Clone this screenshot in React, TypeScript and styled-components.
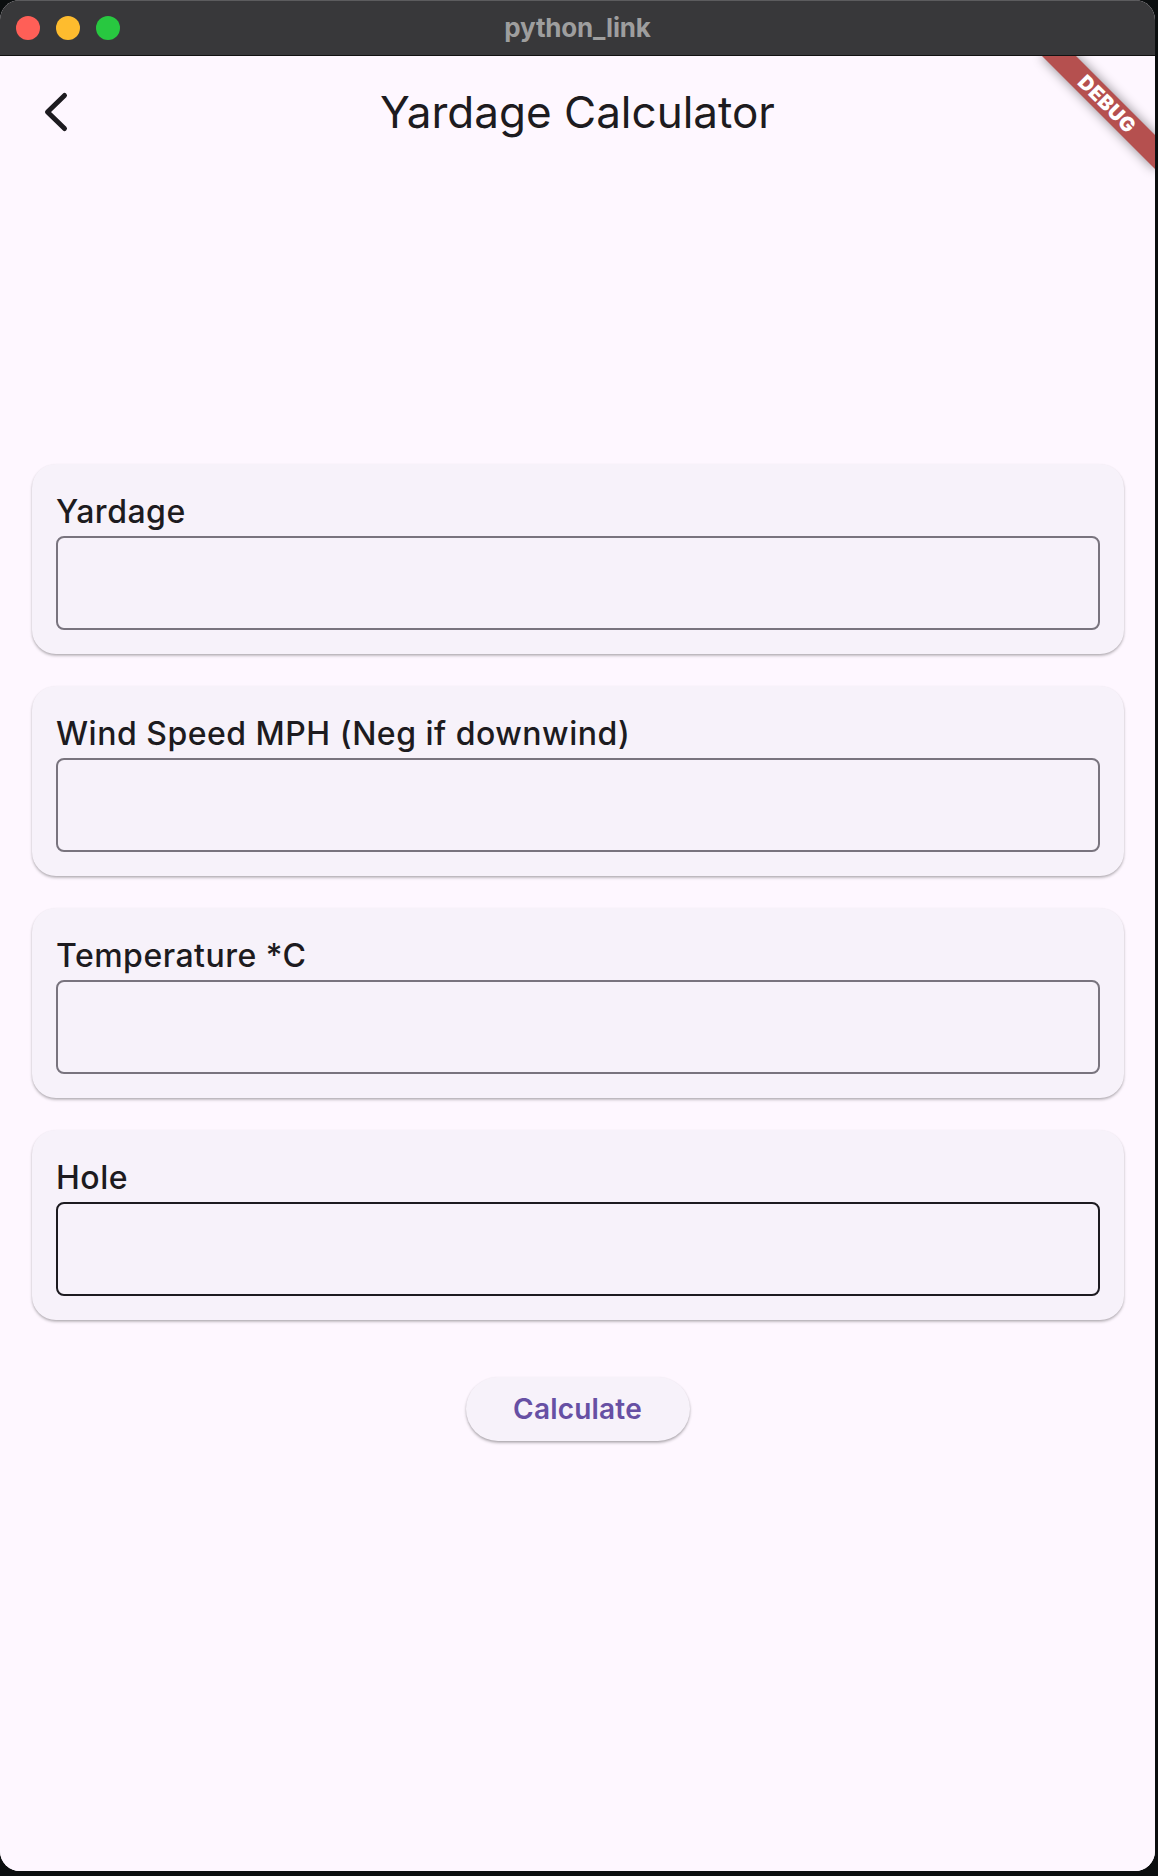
import styled, { createGlobalStyle } from 'styled-components'

const GlobalStyle = createGlobalStyle`
  html, body {
    margin: 0;
    padding: 0;
    background: #0b0e0f;
  }
  body {
    font-family: Inter, "Noto Sans", sans-serif;
  }
`

const fields = [
  { label: 'Yardage', active: false },
  { label: 'Wind Speed MPH (Neg if downwind)', active: false },
  { label: 'Temperature *C', active: false },
  { label: 'Hole', active: true },
]

const BackIcon = () => (
  <svg width="48" height="48" viewBox="0 0 48 48" fill="none">
    <polyline
      points="32.5,7.5 15.5,24 32.5,40.5"
      stroke="#1d1b20"
      strokeWidth="5"
      strokeLinecap="round"
      strokeLinejoin="round"
    />
  </svg>
)

export default function App() {
  return (
    <>
      <GlobalStyle />
      <Window>
        <TitleBar>
          <Lights>
            <Light color="#ff5f57" />
            <Light color="#febc2e" />
            <Light color="#28c840" />
          </Lights>
          <WindowTitle>python_link</WindowTitle>
        </TitleBar>

        <Content>
          <AppBar>
            <BackButton aria-label="Back">
              <BackIcon />
            </BackButton>
            <PageTitle>Yardage Calculator</PageTitle>
            <span />
          </AppBar>

          <Form>
            {fields.map((f) => (
              <FieldCard key={f.label}>
                <Label>{f.label}</Label>
                <Input $active={f.active} />
              </FieldCard>
            ))}
          </Form>

          <Actions>
            <CalcButton>Calculate</CalcButton>
          </Actions>

          <DebugRibbon>DEBUG</DebugRibbon>
        </Content>
      </Window>
    </>
  )
}

const Window = styled.div`
  width: 1155px;
  height: 1871px;
  border-radius: 20px;
  overflow: hidden;
  display: flex;
  flex-direction: column;
  background: #fef7ff;
`

const TitleBar = styled.div`
  position: relative;
  height: 55px;
  flex-shrink: 0;
  background: #38383a;
  border-bottom: 1px solid #121212;
  box-shadow: inset 0 1px 0 #5c5c5e;
  display: flex;
  align-items: center;
  justify-content: center;
`

const Lights = styled.div`
  position: absolute;
  left: 16px;
  top: 16px;
  display: flex;
  gap: 16px;
`

const Light = styled.span<{ color: string }>`
  width: 24px;
  height: 24px;
  border-radius: 50%;
  background: ${(p) => p.color};
`

const WindowTitle = styled.div`
  font-family: Inter, sans-serif;
  font-weight: 700;
  font-size: 26px;
  color: #9e9e9e;
  letter-spacing: -0.2px;
`

const Content = styled.div`
  position: relative;
  flex: 1;
  overflow: hidden;
  background: #fef7ff;
`

const AppBar = styled.div`
  height: 112px;
  display: grid;
  grid-template-columns: 112px 1fr 112px;
  align-items: center;
`

const BackButton = styled.button`
  width: 48px;
  height: 48px;
  margin-left: 32px;
  padding: 0;
  border: none;
  background: none;
  display: flex;
`

const PageTitle = styled.h1`
  margin: 0;
  text-align: center;
  font-family: Inter, sans-serif;
  font-weight: 400;
  font-size: 44px;
  line-height: 56px;
  color: #1d1b20;
`

const Form = styled.div`
  display: flex;
  flex-direction: column;
  gap: 32px;
  padding: 296px 31px 0 32px;
`

const FieldCard = styled.div`
  background: #f7f2fa;
  border-radius: 24px;
  padding: 24px;
  box-shadow: 0 2px 3px rgba(0, 0, 0, 0.22), 0 1px 2px rgba(0, 0, 0, 0.1);
`

const Label = styled.div`
  font-family: Inter, sans-serif;
  font-weight: 500;
  font-size: 32px;
  line-height: 48px;
  letter-spacing: 0.5px;
  color: #1d1b20;
`

const Input = styled.div<{ $active: boolean }>`
  box-sizing: border-box;
  height: 94px;
  border: 2px solid ${(p) => (p.$active ? '#1d1b20' : '#79747e')};
  border-radius: 8px;
`

const Actions = styled.div`
  display: flex;
  justify-content: center;
  padding-top: 57px;
`

const CalcButton = styled.button`
  width: 224px;
  height: 64px;
  border: none;
  border-radius: 32px;
  background: #f7f2fa;
  box-shadow: 0 2px 3px rgba(0, 0, 0, 0.25), 0 1px 2px rgba(0, 0, 0, 0.1);
  font-family: Inter, sans-serif;
  font-weight: 600;
  font-size: 28px;
  letter-spacing: 0.2px;
  color: #6750a4;
`

const DebugRibbon = styled.div`
  position: absolute;
  top: 36px;
  right: -32px;
  width: 160px;
  height: 24px;
  transform: rotate(45deg);
  background: #b5504f;
  box-shadow: 0 0 12px rgba(0, 0, 0, 0.45);
  color: #fff;
  font-family: Inter, sans-serif;
  font-weight: 900;
  font-size: 20px;
  line-height: 24px;
  letter-spacing: 0.5px;
  text-align: center;
`
